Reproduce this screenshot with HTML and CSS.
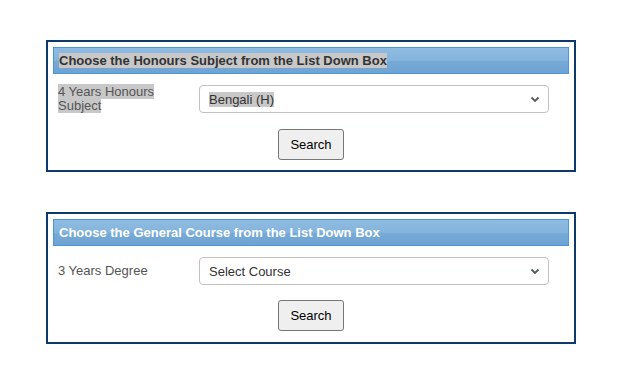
FILE: index.html
```html
<!DOCTYPE html>
<html lang="en">
<head>
    <meta charset="UTF-8" />
    <title>Course Selection</title>
    <link rel="stylesheet" href="styles.css">
</head>
<body>

    <div class="choose-box">
        <div class="box-title selected-title"><span class="sel">Choose the Honours Subject from the List Down Box</span></div>
        <div class="form-row">
            <label class="field-label"><span class="sel">4 Years Honours Subject</span></label>
            <div class="drop">
                <span class="drop-text"><span class="sel">Bengali (H)</span></span>
                <svg class="chevron" width="10" height="7" viewBox="0 0 10 7"><path d="M1.5 1.5 L5 5 L8.5 1.5" fill="none" stroke="#5a5a5a" stroke-width="1.8"/></svg>
            </div>
        </div>
        <div class="btn-row">
            <button class="search-btn">Search</button>
        </div>
    </div>

    <div class="choose-box second">
        <div class="box-title">Choose the General Course from the List Down Box</div>
        <div class="form-row">
            <label class="field-label">3 Years Degree</label>
            <div class="drop">
                <span class="drop-text">Select Course</span>
                <svg class="chevron" width="10" height="7" viewBox="0 0 10 7"><path d="M1.5 1.5 L5 5 L8.5 1.5" fill="none" stroke="#5a5a5a" stroke-width="1.8"/></svg>
            </div>
        </div>
        <div class="btn-row">
            <button class="search-btn">Search</button>
        </div>
    </div>

</body>
</html>
```

FILE: styles.css
```css
* {
    box-sizing: border-box;
    margin: 0;
    padding: 0;
}

body {
    font-family: "Liberation Sans", Arial, sans-serif;
    font-size: 13px;
    background: #fff;
    color: #333;
    padding-top: 40px;
}

.choose-box {
    width: 530px;
    height: 132px;
    margin-left: 46px;
    border: 2px solid #0c3a6c;
    padding: 5px;
}

    .choose-box.second {
        margin-top: 40px;
    }

.box-title {
    height: 27px;
    line-height: 25px;
    padding-left: 5px;
    font-weight: bold;
    color: #fff;
    border: 1px solid #4a96d8;
    background: linear-gradient(#8fbce1 0%, #84b3dc 50%, #76a9d6 52%, #6ea3d3 100%);
}

    .box-title.selected-title {
        color: #333;
    }

.sel {
    background: #c8c8c8;
}

.form-row {
    display: flex;
    align-items: center;
    margin-top: 11px;
    padding-left: 5px;
}

.field-label {
    width: 141px;
    padding-right: 10px;
    line-height: 14px;
    color: #555;
}

.drop {
    width: 350px;
    height: 28px;
    border: 1px solid #c6c0c0;
    border-radius: 4px;
    background: #fff;
    display: flex;
    align-items: center;
    justify-content: space-between;
    padding: 0 8px 0 9px;
}

.drop-text {
    color: #333;
}

.chevron {
    display: block;
}

.btn-row {
    display: flex;
    justify-content: center;
    margin-top: 16px;
}

    .second .btn-row {
        margin-top: 15px;
    }

.search-btn {
    width: 66px;
    height: 31px;
    font-family: "Liberation Sans", Arial, sans-serif;
    font-size: 13px;
    color: #000;
    background: #efefef;
    border: 1px solid #767676;
    border-radius: 3px;
}
```
